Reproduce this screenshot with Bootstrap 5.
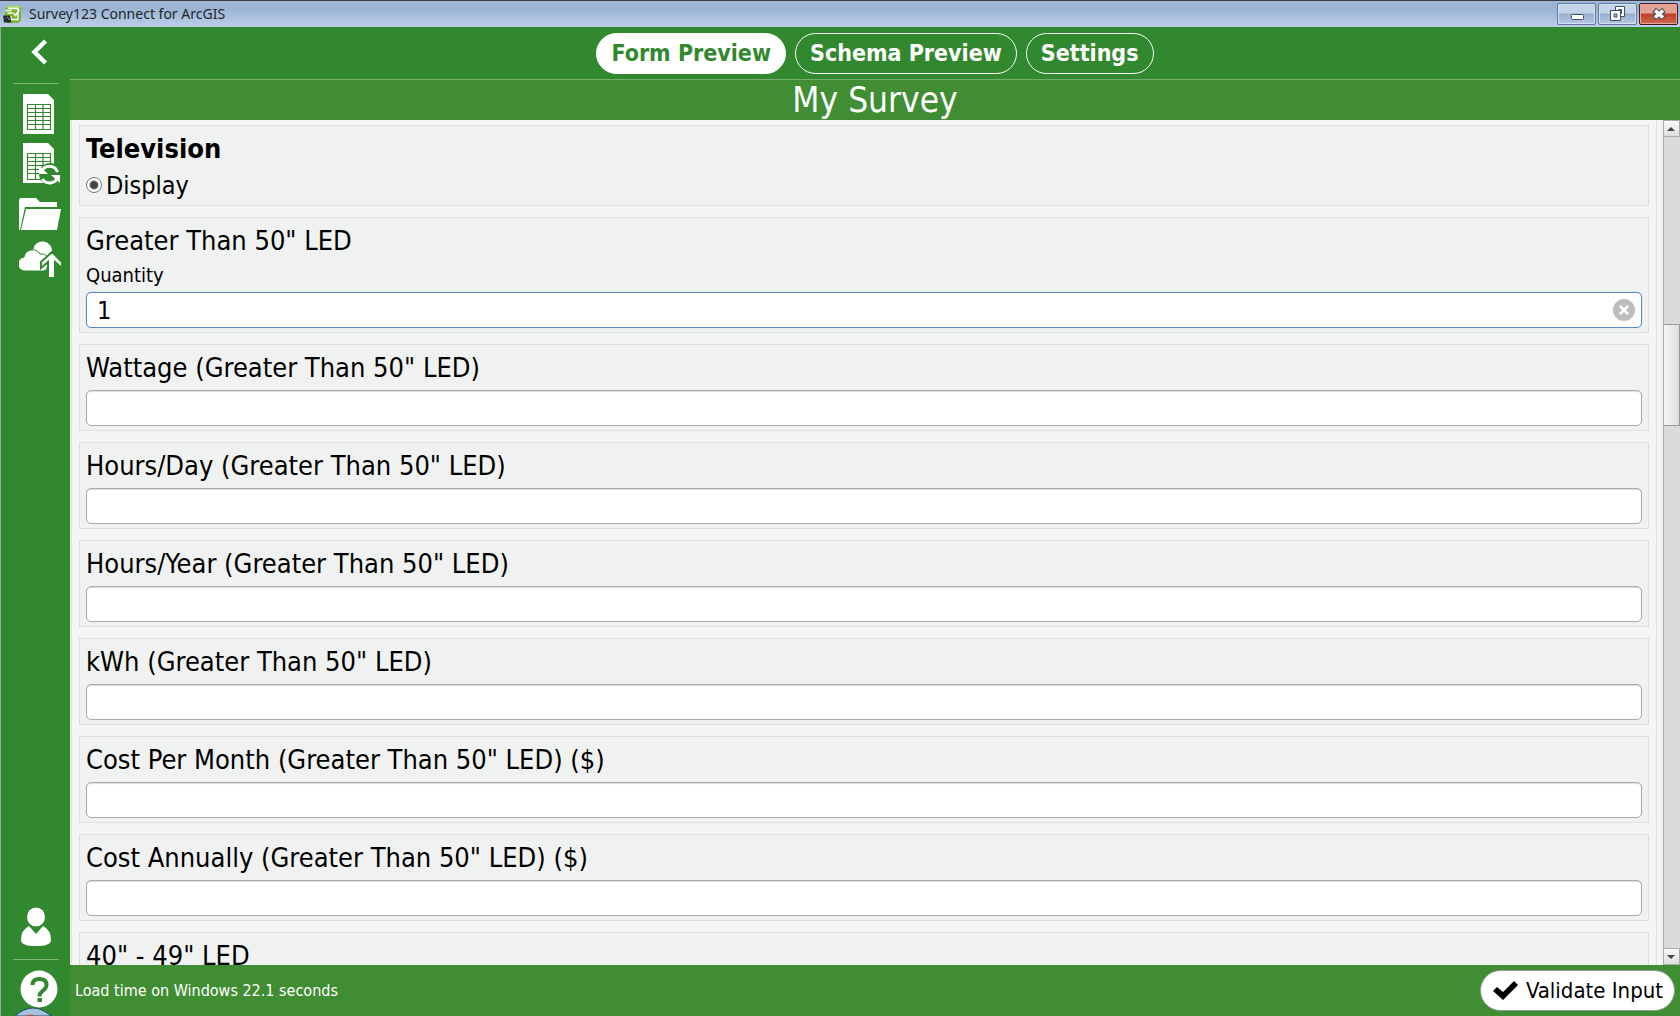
<!DOCTYPE html>
<html lang="en">
<head>
<meta charset="utf-8">
<meta name="viewport" content="width=device-width, initial-scale=1">
<title>Survey123 Connect for ArcGIS</title>
<link href="https://cdn.jsdelivr.net/npm/bootstrap@5.3.0/dist/css/bootstrap.min.css" rel="stylesheet">
<style>
:root { --deep: #32882e; --leaf: #408d33; }
body { font-family: "DejaVu Sans Condensed", "DejaVu Sans", sans-serif; font-stretch: condensed; color: #000; background: var(--deep); }
button { font-family: inherit; }
.fill-rest { flex: 1 1 0; min-width: 0; min-height: 0; }
.titlebar { height: 27px; border-top: 1px solid #3a3a44; background: linear-gradient(#9fb6d8, #9ab4d3 30%, #bccfea); font: 14px/24px "Noto Sans", sans-serif; padding: 0 2px 0 3px; }
.winbtns { gap: 2px; }
.winbtn { width: 39px; height: 22px; padding: 0; border: 1px solid #63799b; border-radius: 2px; box-shadow: inset 0 0 0 1px #d5e2f2; background: linear-gradient(#c3d4e9 45%, #96aecb 50%, #b3cae5); display: flex; align-items: center; justify-content: center; }
.winclose { border-color: #4e1620; box-shadow: inset 0 0 0 1px #e4a79d; background: linear-gradient(#e3a196 45%, #c03d28 50%, #cf6a50); }
.sidebar { width: 70px; background: var(--deep); border-left: 1px solid #9aa79a; padding: 12px 0 5px 12px; }
.sidebar hr { width: 46px; margin: 18px 0 0; border-color: #8dc489; opacity: .8; }
.sidebar hr.lower { margin-top: 12px; }
.sidebar .btn { padding: 0; border: 0; display: block; line-height: 0; margin-left: 6px; text-align: left; }
.sidebar svg { fill: #fff; }
.toolbar { height: 52px; gap: 9px; }
.toolbar .btn { height: 41px; padding: 0 14px; border: 1px solid #fff; color: #fff; font-weight: 700; font-size: 23px; line-height: 38px; }
.toolbar .btn.active { background: #fff; color: var(--deep); border-color: #fff; }
.survey-title { height: 41px; border-top: 1px solid #74ae69; background: var(--leaf); color: #fff; font-size: 35px; line-height: 40px; font-weight: 400; }
.formpane { background: #f4f6f5; }
.formlist { gap: 11px; padding: 5px 7px 0; border-left: 1px solid #dfe2e0; border-right: 1px solid #dfe2e0; margin: 0 6px 0 1px; }
.question { flex: none; border: 1px solid #dcdfdd; background: #f0f2f1; padding: 6px 6px 4px; }
.question .caption { display: block; font-size: 27px; line-height: 33px; margin: 0 0 6px; }
.question .hint { display: block; font-size: 20px; line-height: 24px; margin-bottom: 5px; }
.question .form-control { height: 36px; padding: 0 10px; font-size: 25px; line-height: 34px; color: #000; border: 1px solid #a9a9a9; border-radius: 5px; background: #fff; box-shadow: inset 0 1px 1px #ddd; }
.question .form-control.current { border-color: #5b87cf; box-shadow: 0 0 1px #9db8e5; }
.question .display-row { font-size: 25px; line-height: 30px; height: 30px; }
.dot { appearance: none; width: 16px; height: 16px; margin: 0 4px 2px 0; border: 1px solid #777; border-radius: 50%; background: radial-gradient(circle, #444 0 3px, #777 4px, #fff 5px); }
.clearbtn { position: absolute; right: 7px; top: 7px; width: 22px; height: 22px; padding: 0; border: 0; background: none; line-height: 0; }
.scroller { width: 17px; background: #dbdbdb; border-left: 1px solid #a9a9a9; }
.scroller button { width: 16px; height: 17px; padding: 0; border: 1px solid #aaa; border-left: 0; background: linear-gradient(#fafafa, #dedede); line-height: 0; }
.scroller .thumb { height: 102px; margin-top: 187px; border: 1px solid #999; border-left: 0; background: linear-gradient(90deg, #f6f6f6, #dfdfdf); }
.statusbar { height: 51px; background: var(--leaf); color: #fff; font-size: 16px; padding: 0 5px; }
.statusbar .btn { height: 41px; padding: 0 11px 0 12px; background: #fff; color: #000; border: 1px solid #8e9c98; font-size: 22px; line-height: 38px; }
.orb { position: absolute; left: 14px; bottom: 0; width: 38px; height: 9px; }
</style>
<script src="https://cdn.jsdelivr.net/npm/bootstrap@5.3.0/dist/js/bootstrap.bundle.min.js"></script>
</head>
<body class="d-flex flex-column vh-100 overflow-hidden position-relative">
<header class="titlebar d-flex align-items-center flex-shrink-0">
  <svg width="18" height="18" viewBox="0 0 18 18" aria-hidden="true"><path d="M3 1.500 16 0.500l2 2v13l-3 2.500H4l-3-2.500z" fill="#78b52c"/><path d="M3 1.500 16 .5l2 2-13 1z" fill="#b4dc6c"/><path d="M5.500 3.500h9.500v11H8V11" fill="none" stroke="#fff" stroke-width="1.300"/><path d="M2.500 5.500h6M4.500 8h5M10.500 8l2 2.500 4-6" fill="none" stroke="#fff" stroke-width="1.500"/><path d="M0 10.500h7l1.500 7H1z" fill="#28302b"/><path d="m4 12 3 3" stroke="#98a89c"/></svg>
  <span class="ms-2 text-dark">Survey123 Connect for ArcGIS</span>
  <div class="winbtns d-flex ms-auto">
    <button class="winbtn" aria-label="Minimize"><svg width="14" height="14"><rect x="1.500" y="7.500" width="12" height="5" rx="1" fill="#fff" stroke="#454d62"/></svg></button>
    <button class="winbtn" aria-label="Restore"><svg width="16" height="16"><path d="M5.500.5h9v10h-9z" fill="#fff" stroke="#454d62"/><path d="M8.500 3.500h3v4h-3z" fill="#a7bedb" stroke="#454d62"/><path d="M.5 4.500h10v10H.5z" fill="#fff" stroke="#454d62"/><path d="M4 8h3v3H4z" fill="#a7bedb" stroke="#454d62"/></svg></button>
    <button class="winbtn winclose" aria-label="Close"><svg width="14" height="14"><path d="m2 3 10 8m0-8-10 8" stroke="#4d4e60" stroke-width="5.500"/><path d="m3 3.500 8 7m0-7-8 7" stroke="#fff" stroke-width="3.500"/></svg></button>
  </div>
</header>
<div class="d-flex fill-rest">
  <nav class="sidebar d-flex flex-column flex-shrink-0" aria-label="Survey tools">
    <button class="btn" aria-label="Back"><svg width="42" height="26"><path d="M26.500 2 15.500 13l11 11" fill="none" stroke="#fff" stroke-width="4.500"/></svg></button>
    <hr>
    <button class="btn mt-2" aria-label="Open spreadsheet"><svg width="42" height="44" viewBox="0 1 42 44"><path d="M4 3h25l6 6v34H4z"/><path d="M8.500 13.500h23v25h-23zM8 17.500h24M8 21.500h24M8 25.500h24M8 29.500h24M8 33.500h24M16.500 13v26M24 13v26" fill="none" stroke="#32882e" stroke-width="1.200"/></svg></button>
    <button class="btn mt-1" aria-label="Refresh spreadsheet"><svg width="42" height="46" viewBox="0 1 42 46"><path d="M4 4h25l6 6v34H4z"/><path d="M8.500 14.500h23v26h-23zM8 18.500h24M8 22.500h24M8 26.500h24M8 30.500h24M8 34.500h24M16.500 14v27M24 14v27" fill="none" stroke="#32882e" stroke-width="1.200"/><circle cx="31" cy="35" r="11" fill="#32882e"/><path d="M22.500 33a8.500 8.500 0 0 1 16 0M39 37a8.500 8.500 0 0 1-15.500 3" fill="none" stroke="#fff" stroke-width="3"/><path d="M20 27v8h9zM41 44v-8h-9z"/></svg></button>
    <button class="btn mt-1" aria-label="Open folder"><svg width="44" height="48" viewBox="0 -2 44 48"><path d="M0 8q0-2 2-2h15l4 4h17v5H6L1 38H0z"/><path d="M7 17h35l-4 21H2z"/></svg></button>
    <button class="btn" aria-label="Publish survey"><svg width="44" height="44" viewBox="0 -3 44 44"><path d="M14 9a9.500 9.500 0 0 1 19 2l-6 11q-2-8-13-6z"/><path d="M7 30a7 7 0 0 1-2-14q1-6 7-7 6-1 9 4 8-1 8 8 0 9-5 9z" stroke="#32882e" stroke-width="1"/><path d="m33 11 10 10v6l-7-6v16h-7V21l-7 6v-6z" stroke="#32882e" stroke-width="2"/></svg></button>
    <button class="btn mt-auto" aria-label="Account"><svg width="36" height="42" viewBox="0 -2 36 42"><ellipse cx="17" cy="10" rx="9" ry="9.500"/><path d="m10 19 7 8 7-8q8 4 8 14 0 6-15 6T2 33q0-10 8-14z"/></svg></button>
    <hr class="lower">
    <button class="btn mt-2" aria-label="Help"><svg width="42" height="43" viewBox="0 1 42 43"><circle cx="20" cy="22" r="18.500"/><path d="M13.500 18q0-6 7-6t7 6q0 3-4.500 6.500-2.500 2-2.500 5" fill="none" stroke="#32882e" stroke-width="4"/><path d="M18.500 31h4.500v4h-4.500z" fill="#32882e"/></svg></button>
  </nav>
  <div class="d-flex flex-column fill-rest">
    <div class="toolbar d-flex justify-content-center align-items-center flex-shrink-0">
      <button class="btn rounded-pill active" aria-pressed="true">Form Preview</button>
      <button class="btn rounded-pill">Schema Preview</button>
      <button class="btn rounded-pill">Settings</button>
    </div>
    <h1 class="survey-title text-center m-0 flex-shrink-0">My Survey</h1>
    <main class="formpane d-flex fill-rest">
      <form class="formlist d-flex flex-column flex-grow-1 overflow-hidden" onsubmit="return false">
        <div class="question">
          <h2 class="caption fw-bold">Television</h2>
          <div class="display-row d-flex align-items-center"><input class="dot" type="radio" id="display" name="tv" checked><label for="display">Display</label></div>
        </div>
        <div class="question">
          <label class="caption" for="q1">Greater Than 50" LED</label>
          <label class="hint" for="q1">Quantity</label>
          <div class="position-relative"><input class="form-control current" id="q1" value="1">
          <button class="clearbtn" type="button" aria-label="Clear"><svg width="22" height="22"><circle cx="11" cy="11" r="11" fill="#bdbdbd"/><path d="m7 7 8 8m0-8-8 8" stroke="#fff" stroke-width="2.500"/></svg></button></div>
        </div>
        <div class="question"><label class="caption" for="q2">Wattage (Greater Than 50" LED)</label><input class="form-control" id="q2"></div>
        <div class="question"><label class="caption" for="q3">Hours/Day (Greater Than 50" LED)</label><input class="form-control" id="q3"></div>
        <div class="question"><label class="caption" for="q4">Hours/Year (Greater Than 50" LED)</label><input class="form-control" id="q4"></div>
        <div class="question"><label class="caption" for="q5">kWh (Greater Than 50" LED)</label><input class="form-control" id="q5"></div>
        <div class="question"><label class="caption" for="q6">Cost Per Month (Greater Than 50" LED) ($)</label><input class="form-control" id="q6"></div>
        <div class="question"><label class="caption" for="q7">Cost Annually (Greater Than 50" LED) ($)</label><input class="form-control" id="q7"></div>
        <div class="question"><label class="caption" for="q8">40" - 49" LED</label><input class="form-control" id="q8"></div>
      </form>
      <div class="scroller d-flex flex-column flex-shrink-0">
        <button aria-label="Scroll up"><svg width="9" height="6"><path d="m0 5 4-4 4 4z" fill="#444"/></svg></button>
        <div class="thumb"></div>
        <button class="mt-auto" aria-label="Scroll down"><svg width="9" height="6"><path d="m0 1 4 4 4-4z" fill="#444"/></svg></button>
      </div>
    </main>
    <footer class="statusbar d-flex align-items-center justify-content-between flex-shrink-0">
      <span>Load time on Windows 22.1 seconds</span>
      <button class="btn rounded-pill d-flex align-items-center gap-2"><svg width="25" height="20"><path d="m0 10 4-4 6 5L21 0l4 4-15 15z"/></svg>Validate Input</button>
    </footer>
  </div>
</div>
<svg class="orb" viewBox="0 0 38 9" aria-hidden="true"><path d="M1 9Q19-7 37 9z" fill="#a9c2d8" stroke="#1d4a7d"/><path d="M11 9q6-3 10 0z" fill="#b0574e"/></svg>
</body>
</html>
